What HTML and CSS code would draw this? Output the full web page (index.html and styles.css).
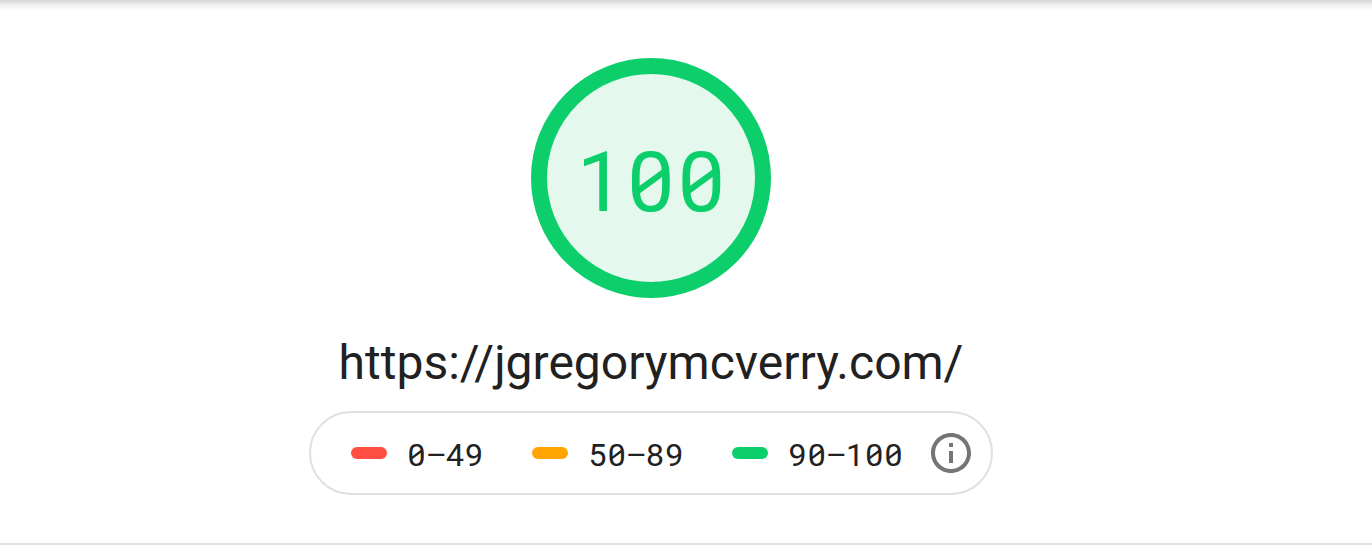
FILE: index.html
```html
<!DOCTYPE html>
<html lang="en"><head><meta charset="utf-8"><title>Performance report</title><link rel="stylesheet" href="styles.css"></head>
<body>
<main class="report">
<div class="gauge"><span class="score mono">1<b class="zero">0</b><b class="zero">0</b></span></div>
<h1 class="url">https://jgregorymcverry.com/</h1>
<div class="legend">
<span class="range"><i class="mark fail"></i><span class="label mono label-fail"><b class="zero">0</b><b class="dash">–</b>49</span></span>
<span class="range"><i class="mark average"></i><span class="label mono label-average">5<b class="zero">0</b><b class="dash">–</b>89</span></span>
<span class="range"><i class="mark pass"></i><span class="label mono label-pass">9<b class="zero">0</b><b class="dash">–</b>1<b class="zero">0</b><b class="zero">0</b></span></span>
<svg class="info" viewBox="0 0 24 24"><path d="M11 7h2v2h-2zm0 4h2v6h-2zm1-9C6.48 2 2 6.48 2 12s4.480 10 10 10 10-4.480 10-10S17.520 2 12 2zm0 18c-4.410 0-8-3.590-8-8s3.590-8 8-8 8 3.590 8 8-3.590 8-8 8z"/></svg>
</div>
</main>
</body></html>
```
FILE: styles.css
```css
* { box-sizing: border-box; }
body { margin: 0; background: #fff; color: #212121; font-family: Roboto, sans-serif; }
.report { height: 545px; padding: 58px 70px 0 0; border-bottom: 2px solid #e0e0e0; display: flex; flex-direction: column; align-items: center; background: linear-gradient(#d6d6d6, #f0f0f0 5px, #fff 10px); }
.gauge { width: 240px; height: 240px; flex: none; border: 16px solid #0cce6b; border-radius: 50%; background: #e5f8ee; display: flex; align-items: center; justify-content: center; color: #0cce6b; padding: 9px 0 0 3px; }
/* fixed-pitch figures with slashed zeros */
.mono { line-height: 1; letter-spacing: 0.0385em; white-space: nowrap; }
.mono b { font-weight: 400; }
.zero { position: relative; display: inline-block; width: 0.6em; }
.zero::after { content: ""; position: absolute; left: 0.131em; top: 0.332em; width: 0.3em; height: 0.31em; background: currentColor; clip-path: polygon(0 71%, 100% 0, 100% 29%, 0 100%); }
.dash { display: inline-block; width: 0.6em; letter-spacing: 0; transform: translateX(-0.04em) scaleX(1.02); transform-origin: left; }
.score { font-size: 84px; }
.url { margin: 37px 0 0; height: 76px; font-size: 48px; line-height: 56px; font-weight: 400; white-space: nowrap; }
.legend { width: 684px; height: 84px; border: 2px solid #e0e0e0; border-radius: 42px; display: flex; align-items: center; padding-left: 40px; }
.range { display: flex; align-items: center; }
.mark { width: 36px; height: 12px; border-radius: 6px; margin-right: 20px; }
.fail { background: #ff4e42; }
.average { background: #ffa400; }
.pass { background: #0cce6b; }
.label { font-size: 32px; padding: 4px 0 0 0.5px; }
.label-fail { width: 125px; }
.label-average { width: 144px; }
.label-pass { width: 139px; }
.info { width: 48px; height: 48px; fill: #757575; flex: none; }
```
